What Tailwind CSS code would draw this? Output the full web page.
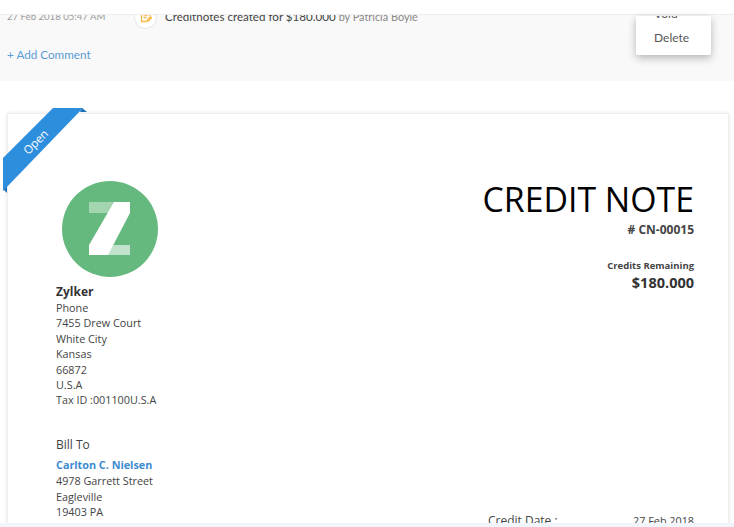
<!DOCTYPE html>
<html lang="en">
   <head>
      <meta charset="UTF-8" />
      <meta name="viewport" content="width=device-width, initial-scale=1.0" />
      <script src="https://cdn.jsdelivr.net/npm/@tailwindcss/browser@4"></script>
      <title>Credit Note</title>
   </head>
   <body class="bg-white font-['Open_Sans',sans-serif] text-[#333]">
      <div class="relative h-[527px] w-[734px] overflow-hidden">
         <!-- top bar -->
         <div class="h-[15px] bg-white border-b border-[#eeeeee]"></div>

         <!-- comments / history -->
         <section class="h-[66px] overflow-hidden bg-[#f9f9f9] pl-[7px] font-['Lato',sans-serif]">
            <div class="-mt-[8px] flex h-[20px] items-center">
               <span class="w-[127px] text-[9.600px] text-[#999]">27 Feb 2018 05:47 AM</span>
               <span class="flex h-[23px] w-[23px] items-center justify-center rounded-full border border-[#dfe5ee] bg-white">
                  <svg width="12" height="12" viewBox="0 0 12 12" fill="none" stroke="#f5b942" stroke-width="1.3">
                     <path d="M10 5V1.500H1.500V10.500H6" />
                     <path d="M3.500 4H8M3.500 6.500H6.500" />
                     <path d="M7 10.500L7.500 8.500L10.500 5.700L11.500 6.800L8.700 9.800Z" />
                  </svg>
               </span>
               <span class="ml-[8px] text-[11.600px] text-[#444]">Creditnotes created for $180.000 <span class="text-[10.900px] text-[#888]">by Patricia Boyle</span></span>
            </div>
            <a class="mt-[19px] block text-[11.700px] leading-[16px] text-[#5a9bd8]" href="#">+ Add Comment</a>
         </section>

         <!-- dropdown menu -->
         <div class="absolute left-[636px] top-[16px] h-[39px] w-[75px] overflow-hidden rounded-b-[2px] bg-white pl-[18px] font-['Lato',sans-serif] text-[12px] text-[#555] shadow-[0_3px_8px_rgba(0,0,0,0.28)]">
            <div class="-mt-[10px] leading-[16px]">Void</div>
            <div class="mt-[8px] leading-[16px]">Delete</div>
         </div>

         <!-- credit note -->
         <main class="relative ml-[7px] mt-[32px] h-[420px] w-[722px] border border-[#eeeeee] bg-white pl-[48px] pr-[34px] pt-[67px] shadow-[0_0_4px_rgba(0,0,0,0.1)]">
            <div class="flex justify-between">
               <div>
                  <svg class="ml-[6px]" width="96" height="96" viewBox="0 0 96 96">
                     <circle cx="48" cy="48" r="48" fill="#66b97e" />
                     <path d="M27 21H68V32H27Z" fill="#fff" fill-opacity="0.4" />
                     <path d="M27 64H68V74H27Z" fill="#fff" fill-opacity="0.6" />
                     <path d="M52 21H68V32L46 74H27V64Z" fill="#fff" />
                  </svg>
                  <div class="mt-[6px] text-[12px] font-bold leading-[17px] text-[#333]">Zylker</div>
                  <div class="text-[10.800px] leading-[15.400px] text-[#444]">
                     <div>Phone</div>
                     <div>7455 Drew Court</div>
                     <div>White City</div>
                     <div>Kansas</div>
                     <div>66872</div>
                     <div>U.S.A</div>
                     <div>Tax ID :001100U.S.A</div>
                  </div>
               </div>
               <div class="-mt-[4px] text-right">
                  <h1 class="text-[33.800px] leading-[44px] text-black">CREDIT NOTE</h1>
                  <div class="mt-[1px] text-[12px] font-bold leading-[16px] text-[#444]"># CN-00015</div>
                  <div class="mt-[20px] text-[9.500px] font-bold leading-[15px] text-[#444]">Credits Remaining</div>
                  <div class="text-[14.500px] font-bold leading-[20px] text-[#333]">$180.000</div>
               </div>
            </div>
            <div class="mt-[28px] flex items-start justify-between">
               <div>
                  <div class="text-[12px] leading-[18px] text-[#444]">Bill To</div>
                  <div class="mt-[3px] text-[10.800px] font-bold leading-[16.400px] text-[#3d8bd0]">Carlton C. Nielsen</div>
                  <div class="text-[10.800px] leading-[15.400px] text-[#444]">
                     <div>4978 Garrett Street</div>
                     <div>Eagleville</div>
                     <div>19403 PA</div>
                  </div>
               </div>
               <div class="mt-[77px] flex w-[206px] justify-between text-[10.800px] leading-[16px] text-[#444]">
                  <span class="text-[12px]">Credit Date :</span>
                  <span>27 Feb 2018</span>
               </div>
            </div>
         </main>

         <!-- status ribbon -->
         <div class="absolute left-0 top-[105px] h-[92px] w-[92px]">
            <svg class="absolute inset-0" width="92" height="92" viewBox="0 0 92 92">
               <path d="M82 3L87 7H80Z" fill="#1f6fb5" />
               <path d="M3 84L7 88V81Z" fill="#1f6fb5" />
               <path d="M53 3H83L3 86V53Z" fill="#2e8ede" />
            </svg>
            <span class="absolute left-[21px] top-[30px] -rotate-45 text-[11.500px] leading-[14px] text-white">Open</span>
         </div>

         <!-- bottom edge -->
         <div class="absolute bottom-0 left-0 h-[4px] w-full bg-[#f0f5fb]"></div>
      </div>
   </body>
</html>
